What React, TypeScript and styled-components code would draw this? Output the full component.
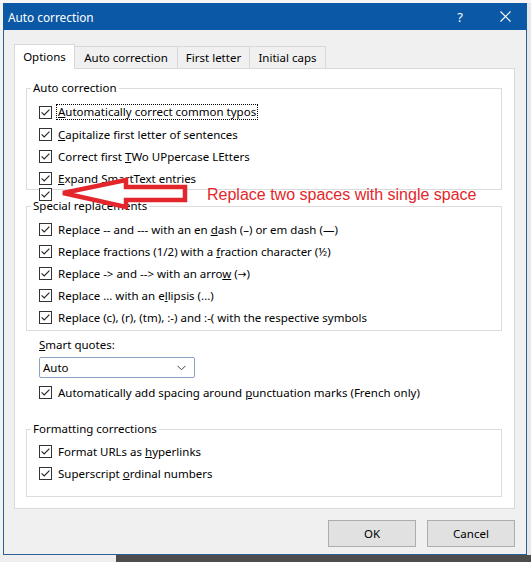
import React from 'react';
import styled, { createGlobalStyle } from 'styled-components';

const GlobalStyle = createGlobalStyle`
  html, body {
    margin: 0;
    padding: 0;
  }
  body {
    background: #f6f6f6;
    font-family: 'Noto Sans', 'Open Sans', sans-serif;
    font-size: 11.5px;
    color: #000;
    overflow: hidden;
  }
`;

const Page = styled.div`
  width: 531px;
  height: 562px;
  display: flex;
  flex-direction: column;
  padding-top: 3px;
  box-sizing: border-box;
`;

const Desk = styled.div`
  display: flex;
`;

const Gutter = styled.div<{ w: number; bg: string }>`
  width: ${(p) => p.w}px;
  background: ${(p) => p.bg};
  flex-shrink: 0;
`;

const Dialog = styled.div`
  width: 524px;
  height: 552px;
  box-sizing: border-box;
  border: 1px solid #2d5f97;
  border-top: none;
  background: #f0f0f0;
  display: flex;
  flex-direction: column;
`;

const TitleBar = styled.div`
  height: 27px;
  margin: 0 -1px;
  background: #0b59a6;
  color: #fff;
  display: flex;
  align-items: center;
  padding-left: 5px;
  font-size: 11.8px;
`;

const Title = styled.span`
  flex: 1;
`;

const TitleButton = styled.span<{ w: number }>`
  width: ${(p) => p.w}px;
  display: flex;
  justify-content: center;
  align-items: center;
  font-size: 13px;
`;

const Body = styled.div`
  flex: 1;
  display: flex;
  flex-direction: column;
  padding: 14px 11px 7px 10px;
`;

const Tabs = styled.div`
  display: flex;
  align-items: flex-end;
  height: 24px;
`;

const Tab = styled.div<{ w: number; active?: boolean }>`
  width: ${(p) => p.w}px;
  height: ${(p) => (p.active ? 25 : 22)}px;
  box-sizing: border-box;
  border: 1px solid #d9d9d9;
  border-bottom: none;
  margin-left: -1px;
  margin-bottom: ${(p) => (p.active ? -1 : 0)}px;
  background: ${(p) => (p.active ? '#fff' : '#f0f0f0')};
  position: relative;
  z-index: ${(p) => (p.active ? 2 : 1)};
  display: flex;
  align-items: center;
  justify-content: center;
  padding-bottom: ${(p) => (p.active ? 2 : 0)}px;
  &:first-child {
    margin-left: 0;
  }
`;

const Panel = styled.div`
  position: relative;
  height: 441px;
  box-sizing: border-box;
  background: #fff;
  border: 1px solid #d9d9d9;
  padding: 11px 12px 0 11px;
`;

const Group = styled.fieldset<{ top?: number; padTop: number; padBottom: number }>`
  margin: ${(p) => p.top ?? 0}px 0 0 0;
  padding: ${(p) => p.padTop}px 0 ${(p) => p.padBottom}px 12px;
  border: 1px solid #dcdcdc;
  min-width: 0;
`;

const Legend = styled.legend`
  padding: 0 2px;
  margin-left: -8px;
  line-height: 16px;
`;

const Row = styled.div`
  display: flex;
  align-items: center;
  height: 22px;
  gap: 6px;
  white-space: nowrap;
`;

const StubRow = styled.div`
  display: flex;
  height: 10px;
  margin-top: -1px;
  margin-bottom: -9px;
  position: relative;
`;

const Box = styled.span`
  width: 13px;
  height: 13px;
  box-sizing: border-box;
  border: 1px solid #333;
  background: #fff;
  display: inline-flex;
  flex-shrink: 0;
`;

const Focused = styled.span`
  border: 1px dotted #000;
  padding: 0 1px;
  margin-left: -2px;
  line-height: 14px;
`;

const Glyph = styled.span`
  font-family: 'DejaVu Sans', sans-serif;
  font-size: 10.5px;
`;

const Quotes = styled.div`
  padding-left: 13px;
  display: flex;
  flex-direction: column;
`;

const FieldLabel = styled.div`
  line-height: 16px;
  margin-top: 6px;
`;

const Select = styled.div`
  margin-top: 4px;
  width: 156px;
  height: 21px;
  box-sizing: border-box;
  border: 1px solid #8da3c4;
  border-radius: 2px;
  display: flex;
  align-items: center;
  justify-content: space-between;
  padding: 0 8px 0 3px;
  margin-bottom: 3px;
`;

const Buttons = styled.div`
  display: flex;
  justify-content: flex-end;
  gap: 11px;
  margin-top: 11px;
`;

const Button = styled.div`
  width: 88px;
  height: 27px;
  box-sizing: border-box;
  border: 1px solid #adadad;
  background: #e1e1e1;
  display: flex;
  align-items: center;
  justify-content: center;
`;

const Arrow = styled.svg`
  position: absolute;
  left: 45px;
  top: 105px;
`;

const Note = styled.div`
  position: absolute;
  left: 192px;
  top: 117px;
  font-family: 'Liberation Sans', Arial, sans-serif;
  font-size: 16px;
  line-height: 18px;
  color: #e3262b;
  white-space: nowrap;
`;

const Bottom = styled.div`
  display: flex;
  flex: 1;
`;

function Check() {
  return (
    <Box>
      <svg width="11" height="11" viewBox="0 0 11 11">
        <path d="M1.6 5.4 L4.2 8 L9.4 2.6" fill="none" stroke="#222" strokeWidth="1.1" />
      </svg>
    </Box>
  );
}

function Option({ children }: { children: React.ReactNode }) {
  return (
    <Row>
      <Check />
      <span>{children}</span>
    </Row>
  );
}

export default function App() {
  return (
    <>
      <GlobalStyle />
      <Page>
        <Desk>
          <Gutter w={3} bg="#f2f2f2" />
          <Dialog>
            <TitleBar>
              <Title>Auto correction</Title>
              <TitleButton w={46}>?</TitleButton>
              <TitleButton w={44}>
                <svg width="11" height="11" viewBox="0 0 11 11">
                  <path d="M0.5 0.5 L10.5 10.5 M10.5 0.5 L0.5 10.5" stroke="#fff" strokeWidth="1.1" />
                </svg>
              </TitleButton>
            </TitleBar>
            <Body>
              <Tabs>
                <Tab w={61} active>Options</Tab>
                <Tab w={104}>Auto correction</Tab>
                <Tab w={73}>First letter</Tab>
                <Tab w={77}>Initial caps</Tab>
              </Tabs>
              <Panel>
                <Group padTop={5} padBottom={0}>
                  <Legend>Auto correction</Legend>
                  <Row>
                    <Check />
                    <Focused>
                      <u>A</u>utomatically correct common typos
                    </Focused>
                  </Row>
                  <Option>
                    <u>C</u>apitalize first letter of sentences
                  </Option>
                  <Option>
                    Correct first <u>T</u>Wo UPpercase LEtters
                  </Option>
                  <Option>
                    <u>E</u>xpand SmartText entries
                  </Option>
                  <StubRow>
                    <Check />
                  </StubRow>
                </Group>

                <Group top={8} padTop={4} padBottom={2}>
                  <Legend>Special replacements</Legend>
                  <Option>
                    Replace -- and --- with an en <u>d</u>ash (–) or em dash (—)
                  </Option>
                  <Option>
                    Replace fractions (1/2) with a <u>f</u>raction character (½)
                  </Option>
                  <Option>
                    Replace -&gt; and --&gt; with an arro<u>w</u> (<Glyph>→</Glyph>)
                  </Option>
                  <Option>
                    Replace ... with an e<u>l</u>lipsis (...)
                  </Option>
                  <Option>Replace (c), (r), (tm), :-) and :-( with the respective symbols</Option>
                </Group>

                <Quotes>
                  <FieldLabel>
                    <u>S</u>mart quotes:
                  </FieldLabel>
                  <Select>
                    <span>Auto</span>
                    <svg width="9" height="6" viewBox="0 0 9 6">
                      <path d="M0.5 0.8 L4.5 4.8 L8.5 0.8" fill="none" stroke="#444" strokeWidth="1" />
                    </svg>
                  </Select>
                  <Option>
                    Automatically add spacing around <u>p</u>unctuation marks (French only)
                  </Option>
                </Quotes>

                <Group top={18} padTop={3} padBottom={12}>
                  <Legend>Formatting corrections</Legend>
                  <Option>
                    Format URLs as <u>h</u>yperlinks
                  </Option>
                  <Option>
                    Superscript <u>o</u>rdinal numbers
                  </Option>
                </Group>

                <Arrow width="130" height="40" viewBox="0 0 130 40">
                  <polygon
                    points="3,19 66,6 66,13 125,13 125,26 66,26 66,33"
                    fill="#fff"
                    stroke="#e3262b"
                    strokeWidth="4.5"
                    strokeLinejoin="miter"
                  />
                </Arrow>
                <Note>Replace two spaces with single space</Note>
              </Panel>
              <Buttons>
                <Button>OK</Button>
                <Button>Cancel</Button>
              </Buttons>
            </Body>
          </Dialog>
          <Gutter w={4} bg="#e6e8ea" />
        </Desk>
        <Bottom>
          <Gutter w={116} bg="#eeeeee" />
          <Gutter w={415} bg="#4d4d4d" />
        </Bottom>
      </Page>
    </>
  );
}
